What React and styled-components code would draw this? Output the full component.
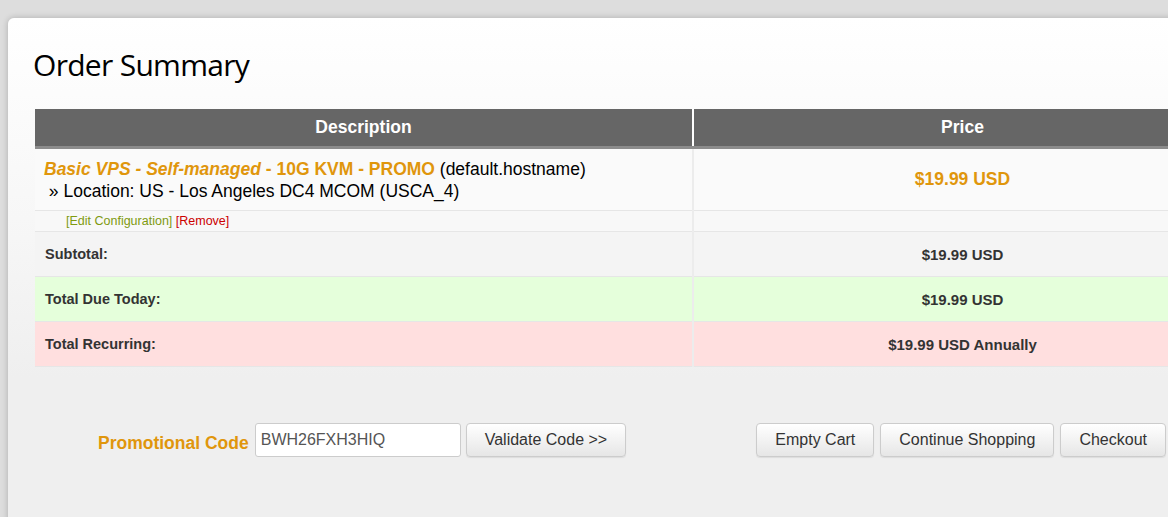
import styled, { createGlobalStyle } from 'styled-components';

const GlobalStyle = createGlobalStyle`
    html, body {
        margin: 0;
        padding: 0;
        overflow: hidden;
        background: #dddddd;
    }
    body {
        font-family: 'Liberation Sans', Arial, sans-serif;
    }
`;

export default function App(){
    return(
        <>
            <GlobalStyle />
            <Page>
                <Card>
                    <Title>Order Summary</Title>
                    <Table>
                        <thead>
                            <tr>
                                <Th width='657px'>Description</Th>
                                <Th>Price</Th>
                            </tr>
                        </thead>
                        <tbody>
                            <Row bg='#fafafa'>
                                <ProductCell>
                                    <Product><i>Basic VPS - Self-managed</i> - 10G KVM - PROMO</Product> (default.hostname)
                                    <br />
                                    &nbsp;» Location: US - Los Angeles DC4 MCOM (USCA_4)
                                </ProductCell>
                                <PriceCell>$19.99 USD</PriceCell>
                            </Row>
                            <Row bg='#f8f8f8'>
                                <ActionsCell>
                                    <Edit>[Edit Configuration]</Edit> <Remove>[Remove]</Remove>
                                </ActionsCell>
                                <ActionsCell />
                            </Row>
                            <Row bg='#f4f4f4'>
                                <LabelCell>Subtotal:</LabelCell>
                                <AmountCell>$19.99 USD</AmountCell>
                            </Row>
                            <Row bg='#e5ffdb'>
                                <LabelCell>Total Due Today:</LabelCell>
                                <AmountCell>$19.99 USD</AmountCell>
                            </Row>
                            <Row bg='#ffdfdf'>
                                <LabelCell>Total Recurring:</LabelCell>
                                <AmountCell>$19.99 USD Annually</AmountCell>
                            </Row>
                        </tbody>
                    </Table>
                    <Bottom>
                        <Promo>
                            <PromoLabel>Promotional Code</PromoLabel>
                            <Input defaultValue='BWH26FXH3HIQ' />
                            <Button>Validate Code &gt;&gt;</Button>
                        </Promo>
                        <Actions>
                            <Button>Empty Cart</Button>
                            <Button>Continue Shopping</Button>
                            <Button>Checkout</Button>
                        </Actions>
                    </Bottom>
                </Card>
            </Page>
        </>
    );
}

const Page = styled.div`
    width: 1300px;
    height: 517px;
    padding: 18px 0 0 8px;
    box-sizing: border-box;
`;

const Card = styled.div`
    width: 1260px;
    height: 520px;
    padding: 26px 27px 0 27px;
    box-sizing: border-box;
    border-radius: 6px;
    background: linear-gradient(to bottom, #ffffff 0%, #f7f7f7 200px, #efefef 360px, #efefef 100%);
    box-shadow: 0 0 6px rgba(0, 0, 0, 0.22);
`;

const Title = styled.h1`
    margin: 0 0 23px -2px;
    font-family: 'Open Sans', 'Noto Sans', sans-serif;
    font-weight: 400;
    font-size: 30px;
    line-height: 42px;
    letter-spacing: -0.7px;
    color: #000000;
`;

const Table = styled.table`
    width: 1196px;
    border-collapse: collapse;
    border-spacing: 0;
`;

const Th = styled.th`
    width: ${p => p.width || 'auto'};
    height: 37px;
    padding: 0;
    background: #666666;
    border-bottom: 3px solid #8c8c8c;
    border-right: 2px solid #ffffff;
    color: #ffffff;
    font-size: 17.5px;
    font-weight: 700;
    text-align: center;
    &:last-child {
        border-right: none;
    }
`;

const Row = styled.tr`
    background: ${p => p.bg};
    td {
        border-bottom: 1px solid #e6e6e6;
        border-right: 2px solid #ececec;
    }
    td:last-child {
        border-right: none;
    }
`;

const ProductCell = styled.td`
    height: 60px;
    padding: 1px 9px 0 9px;
    font-size: 17.5px;
    line-height: 22px;
    color: #000000;
`;

const Product = styled.b`
    color: #e0960c;
`;

const PriceCell = styled.td`
    text-align: center;
    font-size: 17.5px;
    font-weight: 700;
    color: #e0960c;
`;

const ActionsCell = styled.td`
    height: 20px;
    padding: 0 0 0 31px;
    font-size: 12.5px;
    line-height: 20px;
`;

const Edit = styled.span`
    color: #7f9a10;
`;

const Remove = styled.span`
    color: #cc0000;
`;

const LabelCell = styled.td`
    height: 44px;
    padding: 0 10px;
    font-size: 14.5px;
    font-weight: 700;
    color: #333333;
`;

const AmountCell = styled.td`
    text-align: center;
    font-size: 15px;
    font-weight: 700;
    color: #333333;
`;

const Bottom = styled.div`
    width: 1131px;
    margin-top: 56px;
    display: flex;
    align-items: center;
    justify-content: space-between;
`;

const Promo = styled.div`
    display: flex;
    align-items: center;
    padding-left: 63px;
`;

const PromoLabel = styled.span`
    font-size: 17.5px;
    font-weight: 700;
    color: #e0960c;
    margin-right: 6px;
    padding-top: 6px;
`;

const Input = styled.input`
    width: 206px;
    height: 34px;
    padding: 0 5px;
    margin-right: 5px;
    box-sizing: border-box;
    border: 1px solid #cccccc;
    border-radius: 3px;
    background: #ffffff;
    font-family: 'Liberation Sans', Arial, sans-serif;
    font-size: 16px;
    color: #555555;
    outline: none;
`;

const Actions = styled.div`
    display: flex;
    gap: 6px;
`;

const Button = styled.button`
    height: 34px;
    padding: 0 18px;
    box-sizing: border-box;
    border: 1px solid #cccccc;
    border-radius: 4px;
    background: linear-gradient(to bottom, #ffffff 0%, #e6e6e6 100%);
    box-shadow: 0 1px 1px rgba(0, 0, 0, 0.08);
    font-family: 'Liberation Sans', Arial, sans-serif;
    font-size: 16px;
    color: #333333;

    :hover {
        cursor: pointer;
    }
`;
